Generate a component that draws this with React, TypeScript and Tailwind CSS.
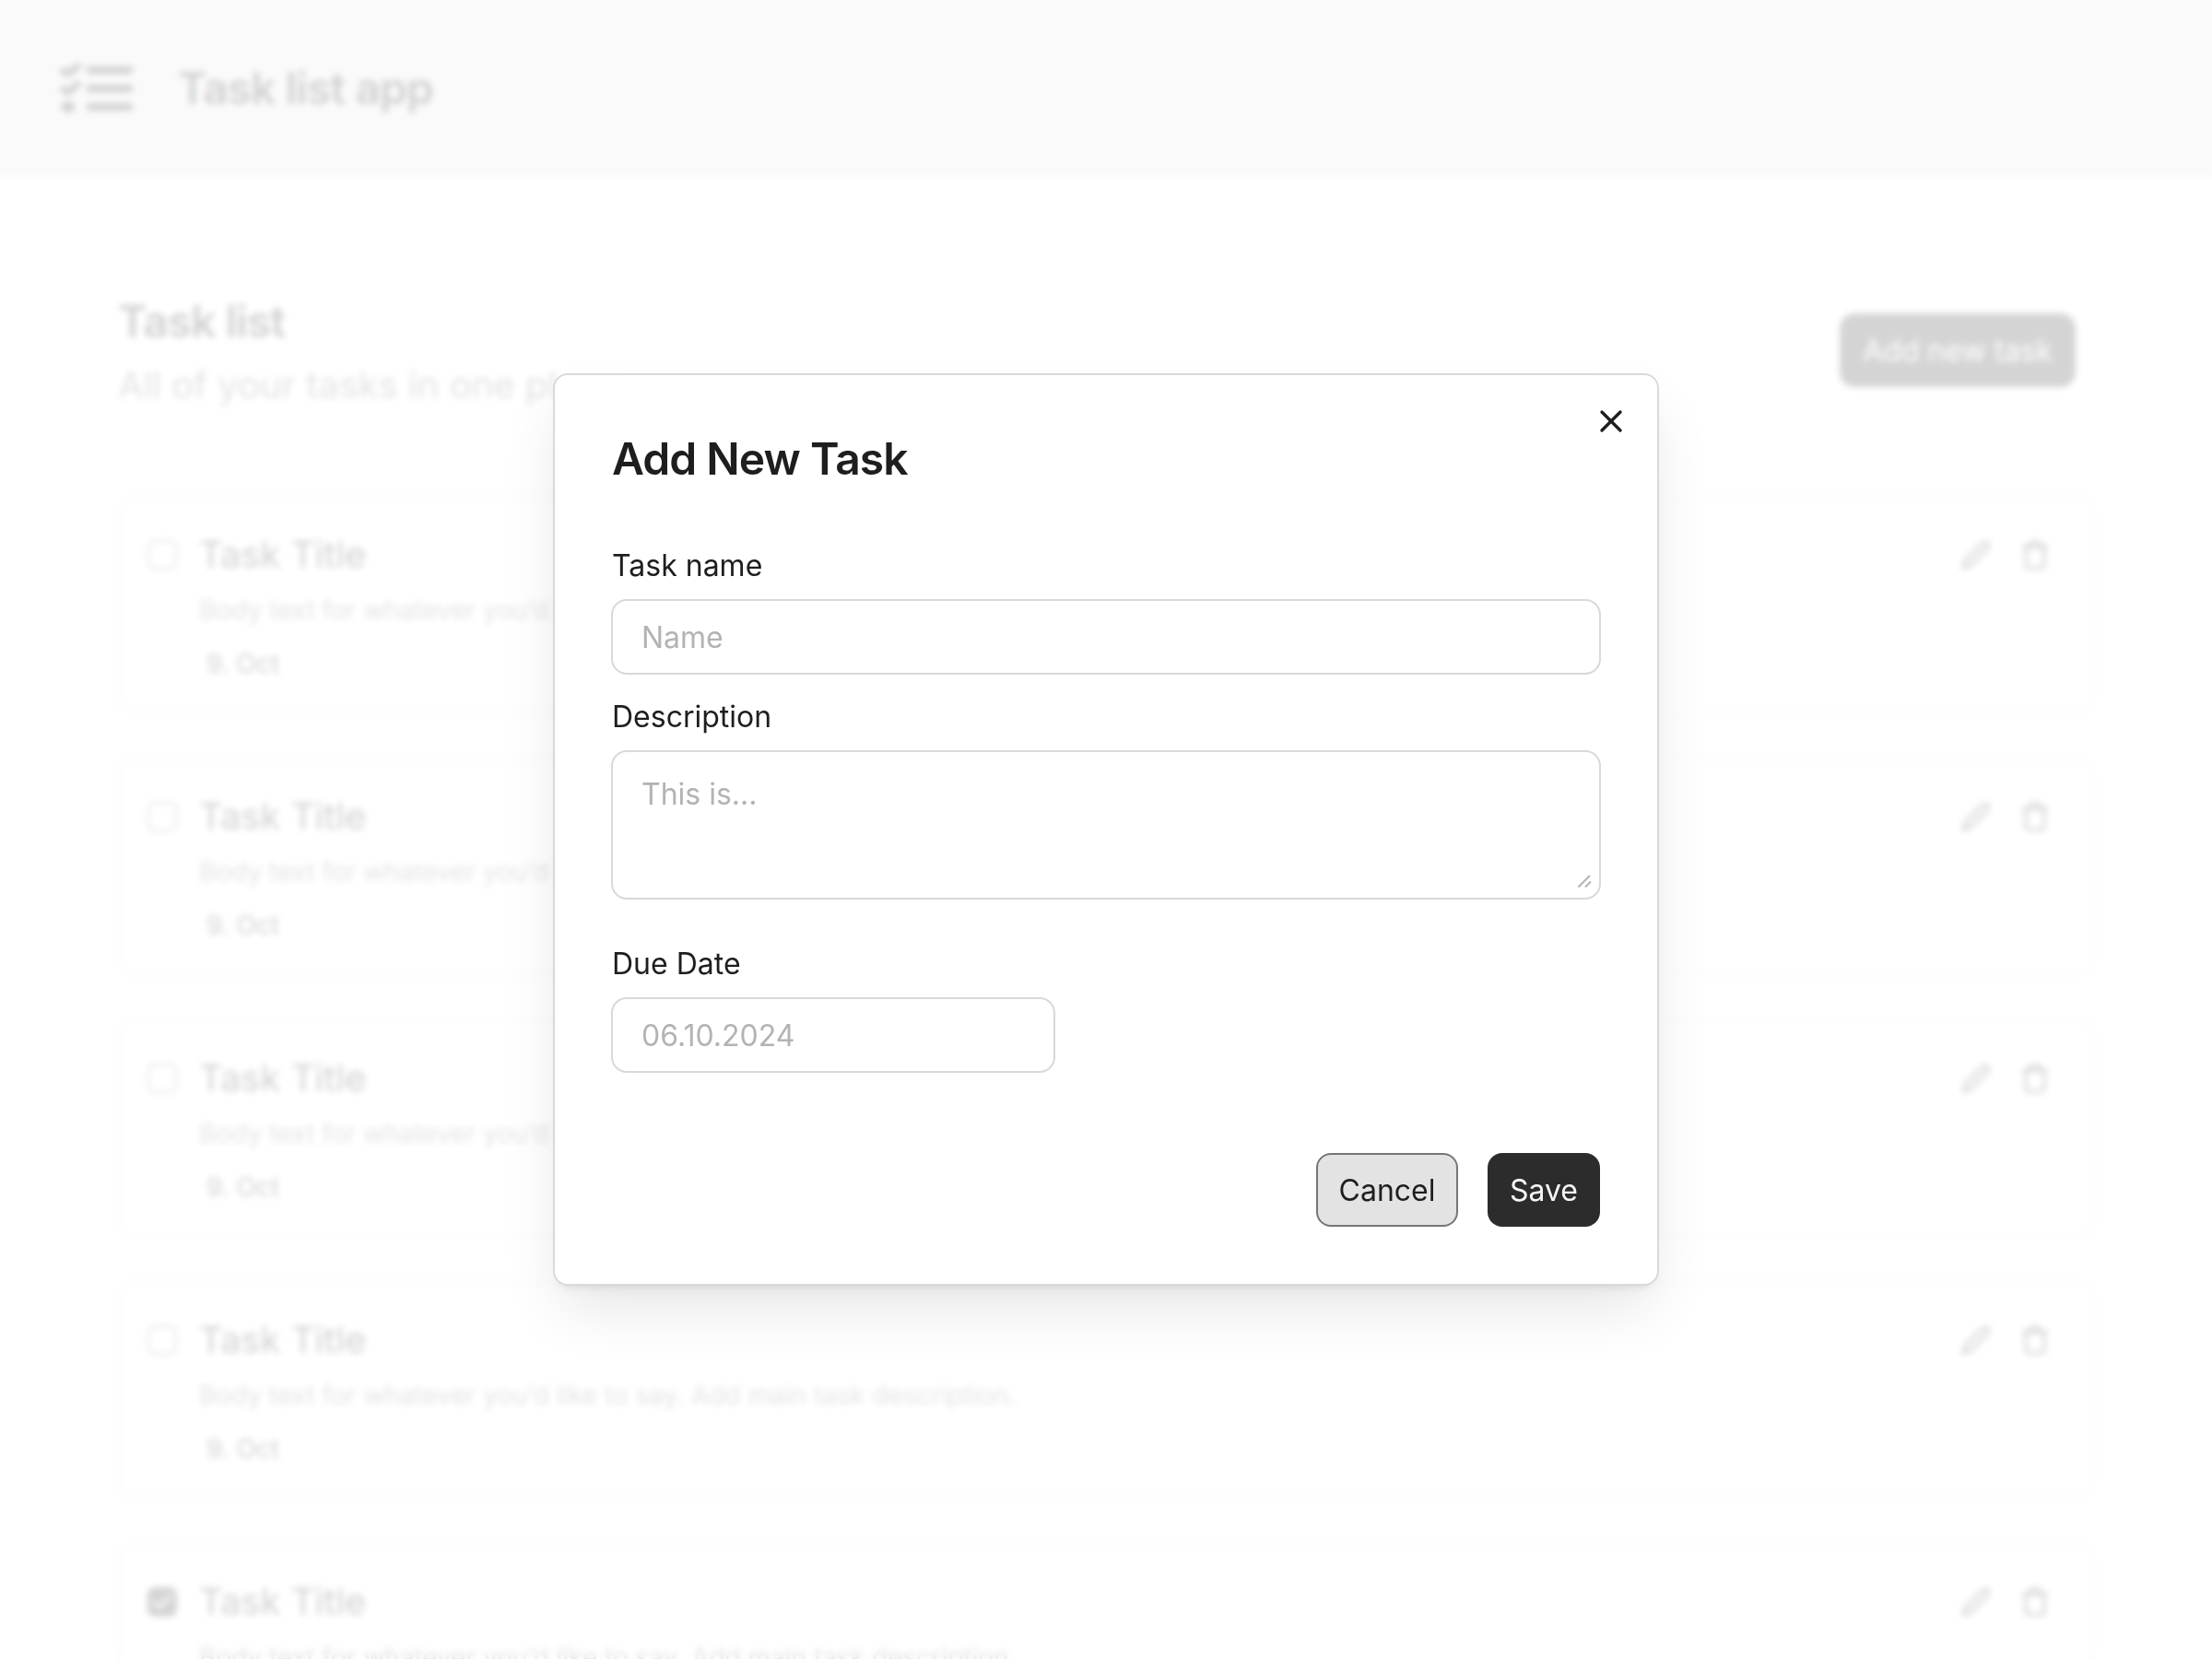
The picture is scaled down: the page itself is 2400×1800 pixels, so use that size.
import { Check, X } from "lucide-react";
import { FaTasks } from "react-icons/fa";
import { FiEdit2, FiTrash } from "react-icons/fi";

const tasks = [
  { id: 1, done: false },
  { id: 2, done: false },
  { id: 3, done: false },
  { id: 4, done: false },
  { id: 5, done: true },
];

function TaskCard({ done }: { done: boolean }) {
  return (
    <article className="flex h-[236px] shrink-0 items-start rounded-2xl border-2 border-[#d9d9d9] bg-white pt-[38px] pr-[45px] pl-[30px]">
      <span
        className={
          done
            ? "mt-2 flex size-8 items-center justify-center rounded-lg bg-[#2c2c2c] text-[#f5f5f5]"
            : "mt-2 flex size-8 rounded-lg border-2 border-[#757575]"
        }
      >
        {done && <Check className="size-7" strokeWidth={2.6} />}
      </span>
      <div className="ml-6 flex-1">
        <h3 className="text-[40px] leading-12 text-[#1e1e1e]">Task Title</h3>
        <p className="mt-4 text-[28px] leading-[40px] text-[#757575]">
          Body text for whatever you’d like to say. Add main task description.
        </p>
        <p className="mt-[18px] ml-2 text-[28px] leading-[40px] text-[#1e1e1e]">9. Oct</p>
      </div>
      <div className="mt-[7px] flex gap-[30px] text-[#1e1e1e]">
        <FiEdit2 className="size-[34px]" />
        <FiTrash className="size-[34px]" />
      </div>
    </article>
  );
}

function TaskPage() {
  return (
    <div className="flex h-full flex-col bg-white">
      <header className="flex h-48 shrink-0 items-center gap-12 bg-[#e6e6e6] px-16 text-[#1e1e1e]">
        <FaTasks className="h-16 w-20" preserveAspectRatio="none" />
        <h1 className="ml-px text-5xl leading-[1.2] font-semibold tracking-[-0.02em]">Task list app</h1>
      </header>
      <main className="flex flex-1 flex-col px-32 pt-32">
        <div className="flex items-start justify-between pr-5">
          <div>
            <h2 className="text-5xl leading-[1.2] font-semibold tracking-[-0.02em] text-[#1e1e1e]">Task list</h2>
            <p className="mt-4 text-[40px] leading-12 text-[#757575]">All of your tasks in one place</p>
          </div>
          <button className="mt-5 h-20 w-64 rounded-2xl bg-[#2c2c2c] pt-0.5 text-[32px] leading-8 text-[#f5f5f5]">
            Add new task
          </button>
        </div>
        <div className="mt-24 flex flex-col gap-12">
          {tasks.map((t) => (
            <TaskCard key={t.id} done={t.done} />
          ))}
        </div>
      </main>
    </div>
  );
}

const field =
  "block rounded-[17px] border-2 border-[#d9d9d9] bg-white px-[31px] text-[32px] placeholder:text-[#b3b3b3] placeholder:opacity-100";

function AddTaskDialog() {
  return (
    <section className="relative flex h-[990px] w-[1200px] flex-col rounded-2xl border-2 border-[#d9d9d9] bg-white px-[61px] pt-[62px] pb-[62px] text-[#1e1e1e] shadow-[0_32px_64px_-8px_rgba(12,12,13,0.1),0_8px_12px_-8px_rgba(12,12,13,0.14)]">
      <button className="absolute top-[30px] right-[30px]">
        <X className="size-10" strokeWidth={2} />
      </button>
      <h2 className="ml-px text-5xl leading-[58px] font-semibold tracking-[-0.02em]">Add New Task</h2>

      <label className="mt-16 ml-px text-[32px] leading-[45px]">Task name</label>
      <input placeholder="Name" className={`${field} mt-3.5 h-[82px] w-[1074px] shrink-0 leading-8`} />

      <label className="mt-[23px] ml-px text-[32px] leading-[45px]">Description</label>
      <div className="relative mt-3.5 h-[162px] w-[1074px] shrink-0">
        <textarea placeholder="This is..." className={`${field} h-[162px] w-[1074px] resize-none pt-[23px] leading-[45px]`} />
        <svg className="absolute right-[10px] bottom-[13px] h-[14px] w-4" viewBox="0 0 16 14" fill="none" stroke="#b3b3b3" strokeWidth="2">
          <path d="M1.5 13.5 14 1M9 13.5 15 7.5" />
        </svg>
      </div>

      <label className="mt-[47px] ml-px text-[32px] leading-[45px]">Due Date</label>
      <input placeholder="06.10.2024" className={`${field} mt-3.5 h-[82px] w-[482px] shrink-0 leading-8`} />

      <div className="mt-auto mr-px flex justify-end gap-8 text-[32px] leading-8">
        <button className="h-20 w-[154px] rounded-2xl border-2 border-[#767676] bg-[#e3e3e3] pt-0.5">Cancel</button>
        <button className="h-20 w-[122px] rounded-2xl bg-[#2c2c2c] pt-0.5 text-[#f5f5f5]">Save</button>
      </div>
    </section>
  );
}

export default function App() {
  return (
    <div className="relative h-[1800px] w-[2400px] overflow-hidden font-['Inter',sans-serif]">
      <TaskPage />
      <div className="absolute inset-0 flex items-center justify-center bg-white/80 backdrop-blur-[3.5px]">
        <AddTaskDialog />
      </div>
    </div>
  );
}
